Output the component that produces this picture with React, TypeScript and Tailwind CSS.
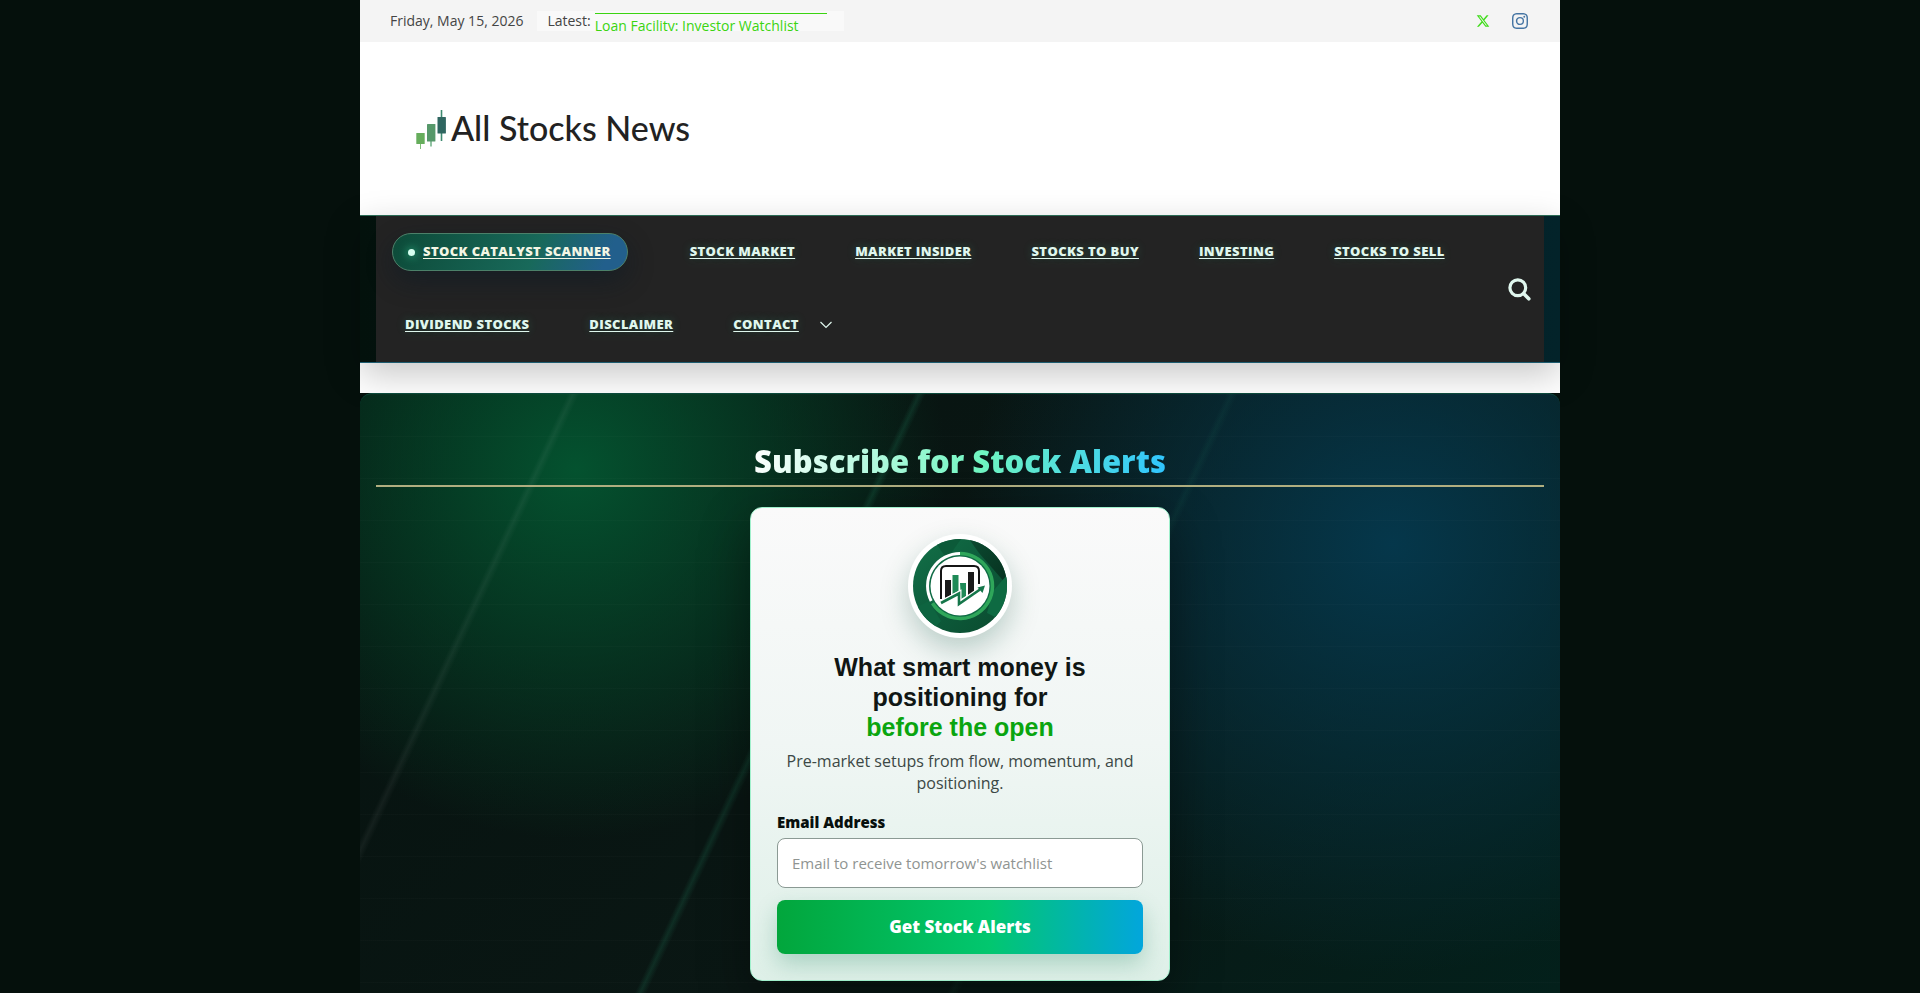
import { BsInstagram } from 'react-icons/bs'
import { FaXTwitter } from 'react-icons/fa6'

const firstRow = ['Stock Market', 'Market Insider', 'Stocks to Buy', 'Investing', 'Stocks to Sell']
const secondRow = ['Dividend Stocks', 'Disclaimer', 'Contact']

function CandleMark() {
  return (
    <svg width="32" height="40" viewBox="0 0 32 40" aria-hidden="true" className="mt-1">
      <path d="M4.500 33v6" stroke="#7fbf7a" strokeWidth="1" />
      <rect x="0.300" y="23" width="8.400" height="11" rx="0.600" fill="#66ad5c" />
      <path d="M15 30v6.500" stroke="#63a97c" strokeWidth="1.400" />
      <rect x="11" y="14" width="8.400" height="17.500" rx="0.600" fill="#56986a" />
      <path d="M25.500 0v31" stroke="#3d8a70" strokeWidth="1.600" />
      <rect x="21.500" y="7" width="8.400" height="16.500" rx="0.600" fill="#2f6660" />
    </svg>
  )
}

function RoundLogo() {
  return (
    <svg viewBox="0 0 94 94" className="block w-full" role="img" aria-label="All Stocks News">
      <defs>
        <linearGradient id="ring" x1="0" y1="0" x2="1" y2="1">
          <stop offset="0" stopColor="#127048" />
          <stop offset="0.550" stopColor="#0d5a3a" />
          <stop offset="1" stopColor="#0a4a2e" />
        </linearGradient>
        <linearGradient id="shade" x1="0" y1="0" x2="1" y2="1">
          <stop offset="0" stopColor="#0b4a30" />
          <stop offset="1" stopColor="#07301f" />
        </linearGradient>
        <clipPath id="disc">
          <circle cx="47" cy="47" r="47" />
        </clipPath>
      </defs>
      <g clipPath="url(#disc)">
        <rect width="94" height="94" fill="url(#ring)" />
        <path d="M20 0l14 20 14-20z" fill="#0c5a39" />
        <path d="M56 0l10 14 28 32V0z" fill="url(#shade)" />
        <path d="M94 36L80 52l-6 22 20 10z" fill="#0e6a42" />
        <path d="M0 70l16-8 12 20-10 12H0z" fill="#0e6440" />
      </g>
      <circle cx="47" cy="47" r="34" fill="#0f6b45" />
      <path d="M47 14.500a32.500 32.500 0 1 1-27.500 49.800" fill="none" stroke="#2fa65a" strokeWidth="3.500" />
      <path d="M47 14.500a32.500 32.500 0 0 0-28.800 47.500" fill="none" stroke="#fff" strokeWidth="3" />
      <circle cx="47" cy="47" r="29.500" fill="#fff" />
      <path d="M28 60V32q0-5 5-5h28q5 0 5 5v13" fill="none" stroke="#151515" strokeWidth="2" />
      <path d="M32 41h6v15l-6 3z" fill="#1a1a1a" />
      <path d="M39.500 36h6v16l-6 3z" fill="#1f8a57" />
      <path d="M47 44h6v13l-5 3z" fill="#1f8a57" />
      <path d="M55 33h6v21l-6 3z" fill="#1a1a1a" />
      <path d="M28 64l18-9.500V65l21-14.500" fill="none" stroke="#fff" strokeWidth="5" />
      <path d="M28 64l18-9.500V65l21-14.500" fill="none" stroke="#15764a" strokeWidth="2.600" />
      <path d="M64.500 48.500l7.500-2-2.500 7.500z" fill="#15764a" />
    </svg>
  )
}

function NavLink({ label }: { label: string }) {
  return (
    <a href="#" className="underline underline-offset-2 [text-shadow:0_0_10px_rgba(52,211,153,0.25)]">
      {label}
    </a>
  )
}

export default function App() {
  return (
    <div className="flex min-h-screen flex-col bg-[#05100c] font-['Open_Sans',sans-serif]">
      <div className="mx-auto flex w-full max-w-[1200px] flex-1 flex-col bg-white">
        {/* Top bar */}
        <div className="flex h-[42px] items-center justify-between bg-[#f4f4f4] pr-8 pl-[30px] text-sm text-[#444]">
          <div className="flex items-center gap-3.5">
            <time dateTime="2026-05-15">Friday, May 15, 2026</time>
            <div className="flex h-5 w-[307px] items-end gap-1 bg-[#f9f9f9] pl-2.5">
              <span className="leading-5">Latest:</span>
              <a href="#" className="h-[18px] w-[232px] overflow-hidden border-t border-[#3bd411] pt-0.5 leading-5 text-[#3bd411]">
                Loan Facility: Investor Watchlist
              </a>
            </div>
          </div>
          <div className="flex items-center gap-[22px]">
            <a href="#" aria-label="X" className="text-[#3fdc1a]">
              <FaXTwitter size={14} />
            </a>
            <a href="#" aria-label="Instagram" className="text-[#4675a3]">
              <BsInstagram size={16} />
            </a>
          </div>
        </div>

        {/* Branding */}
        <header className="flex h-[173px] items-center px-14 pb-0.5">
          <a href="#" className="flex items-center gap-[3px]">
            <CandleMark />
            <span className="font-['Lato',sans-serif] text-[34px] font-medium text-[#222]">All Stocks News</span>
          </a>
        </header>

        {/* Main navigation */}
        <nav className="relative border-y border-t-[#2b6b55] border-b-[#1d5c70] bg-linear-to-r from-[#03110c] to-[#03232a] px-4 shadow-[0_12px_34px_rgba(0,0,0,0.22)]">
          <div className="flex items-center justify-between bg-[#232323] pr-[13px] pl-4 text-[13px] font-extrabold tracking-[0.03em] text-[#e0f7ee] uppercase">
            <ul>
              <li>
                <ul className="flex h-[72px] items-center gap-15">
                  <li className="mr-0.5">
                    <a
                      href="#"
                      className="flex h-[38px] items-center gap-2 rounded-full border border-[#4c8069] bg-linear-[115deg,#0d4a38_0%,#18695a_60%,#225f8c_90%] pr-4 pl-[15px] text-[#f3f6e4] shadow-[0_10px_26px_rgba(8,24,40,0.45)]"
                    >
                      <span className="size-[7px] rounded-full bg-[#d6fff0] shadow-[0_0_10px_#34d399]" />
                      <span className="underline underline-offset-2">Stock Catalyst Scanner</span>
                    </a>
                  </li>
                  {firstRow.map((label) => (
                    <li key={label}>
                      <NavLink label={label} />
                    </li>
                  ))}
                </ul>
              </li>
              <li>
                <ul className="flex h-[74px] items-center gap-15 pl-[13px]">
                  {secondRow.map((label) => (
                    <li key={label}>
                      <NavLink label={label} />
                    </li>
                  ))}
                  <li className="-ml-10">
                    <button type="button" aria-label="Open contact menu" className="block">
                      <svg width="14" height="8" viewBox="0 0 14 8" fill="none" stroke="currentColor" strokeWidth="1.200">
                        <path d="M1.500 1L7 6.500 12.500 1" />
                      </svg>
                    </button>
                  </li>
                </ul>
              </li>
            </ul>
            <button type="button" aria-label="Search">
              <svg width="23" height="23" viewBox="0 0 23 23" fill="none" stroke="currentColor" strokeLinecap="round">
                <circle cx="9.800" cy="9.800" r="7.900" strokeWidth="3.200" />
                <path d="M15.800 15.800l5 5" strokeWidth="3.600" />
              </svg>
            </button>
          </div>
        </nav>

        {/* Subscribe */}
        <div className="mt-[30px] flex flex-1 bg-[#05100c]">
          <section className="relative flex-1 rounded-t-xl border-t border-[#0c4a3c] bg-[radial-gradient(circle_at_18%_75px,#04522f_0,#04522f00_370px),radial-gradient(circle_at_86%_150px,#05374b_0,#05374b00_430px),linear-gradient(135deg,#06120f_0%,#0a1714_55%,#03201b_100%)] px-4 pt-[47px] pb-3">
            {/* Light streaks and faint rules */}
            <div className="absolute inset-0 bg-[linear-gradient(115deg,transparent_188px,rgba(255,255,255,0.05)_193px,transparent_199px,transparent_502px,rgba(52,211,153,0.12)_507px,transparent_513px,transparent_785px,rgba(52,211,153,0.05)_790px,transparent_796px),repeating-linear-gradient(180deg,rgba(255,255,255,0.015)_0,rgba(255,255,255,0.015)_1px,transparent_1px,transparent_42px)]" />
            <div className="relative">
              <h2 className="flex justify-center border-b-2 border-[#b0ae80] pb-1 text-[31px] leading-10 font-extrabold">
                <span className="bg-linear-[100deg,#fff_0%,#6ff5c0_55%,#2fc4ff_100%] bg-clip-text text-transparent">
                  Subscribe for Stock Alerts
                </span>
              </h2>

              <form className="mx-auto mt-5 flex w-full max-w-[420px] flex-col rounded-xl border border-[#a0f0cc] bg-linear-to-b from-[#fafafa] via-[#f0f6f4] to-[#def0e8] p-[26px] shadow-[0_20px_50px_rgba(0,0,0,0.4)]">
                <div className="mx-auto w-[104px] rounded-full bg-white p-[5px] shadow-[0_12px_28px_rgba(10,80,60,0.25)]">
                  <RoundLogo />
                </div>
                <h3 className="mt-3.5 text-center font-['Liberation_Sans',sans-serif] text-[25px] leading-[30px] font-bold text-[#101614]">
                  What smart money is positioning for
                  <span className="block text-[#0aa50f]">before the open</span>
                </h3>
                <p className="mt-2 text-center leading-[22px] text-[#3c4845]">
                  Pre-market setups from flow, momentum, and positioning.
                </p>
                <label htmlFor="email" className="mt-4 text-[15px] leading-6 font-extrabold text-[#08100d]">
                  Email Address
                </label>
                <input
                  id="email"
                  type="email"
                  placeholder="Email to receive tomorrow's watchlist"
                  className="mt-1 h-[50px] rounded-lg border border-[#8b9a94] bg-white px-3.5 text-[15px] placeholder:text-[#8f9492]"
                />
                <button
                  type="submit"
                  className="mt-3 h-[54px] rounded-lg bg-linear-[90deg,#02a63c_0%,#02c76f_58%,#02a6dc_100%] text-[17px] font-extrabold text-white shadow-[0_10px_22px_rgba(10,120,80,0.25)]"
                >
                  Get Stock Alerts
                </button>
              </form>
            </div>
          </section>
        </div>
      </div>
    </div>
  )
}
